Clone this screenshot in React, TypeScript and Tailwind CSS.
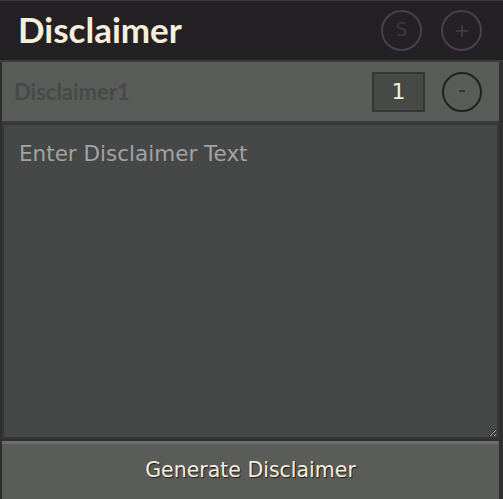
import React from 'react';

const App: React.FC = () => {
    return (
        <div className="w-[503px] h-[499px] bg-[#2e2f2e] flex flex-col overflow-hidden" style={{ fontFamily: 'Lato, "Open Sans", sans-serif' }}>
            <div className="h-[62px] bg-[#232124] border-t border-[#3a3a3c] border-b-2 border-b-[#3b3c3b] flex items-center justify-between pl-[18px] pr-[21px]">
                <h1 className="text-[35px] font-bold text-[#f6efd9] leading-none mt-[-2px]">Disclaimer</h1>
                <div className="flex gap-[19px]">
                    <button className="w-[41px] h-[41px] rounded-full border-2 border-[#4a3f52] flex items-center justify-center text-[19px] text-[#3d3840] pb-[2px]" style={{ fontFamily: '"DejaVu Sans", sans-serif' }}>
                        S
                    </button>
                    <button className="w-[41px] h-[41px] rounded-full border-2 border-[#4a3f52] flex items-center justify-center">
                        <svg width="14" height="14" viewBox="0 0 14 14">
                            <path d="M7 1v12M1 7h12" stroke="#4a3f52" strokeWidth="1.6" />
                        </svg>
                    </button>
                </div>
            </div>
            <div className="flex-1 flex flex-col pl-[2px] pr-[4px]">
                <div className="h-[59px] bg-[#5a5c5a] flex items-center justify-between pl-[12px] pr-[17px]">
                    <span className="text-[22px] font-bold text-[#484a48]">Disclaimer1</span>
                    <div className="flex items-center gap-[17px]">
                        <div className="w-[53px] h-[40px] bg-[#474947] border-2 border-[#353635] flex items-center justify-center text-[22px] text-[#f6efd9]" style={{ fontFamily: '"DejaVu Sans", sans-serif' }}>
                            1
                        </div>
                        <button className="w-[40px] h-[40px] rounded-full border-2 border-[#222222] flex items-center justify-center">
                            <svg width="8" height="4" viewBox="0 0 8 4" className="mt-[-2px]">
                                <path d="M1 2h6" stroke="#2a2a2a" strokeWidth="1.6" />
                            </svg>
                        </button>
                    </div>
                </div>
                <div className="h-[2px] bg-[#3b3c3b]" />
                <textarea
                    className="h-[316px] w-full bg-[#464847] border-2 border-[#353635] text-[21.5px] text-[#a3a3a3] placeholder:text-[#a3a3a3] px-[15px] pt-[13px] pb-[12px] outline-none resize-y"
                    style={{ fontFamily: '"DejaVu Sans", sans-serif' }}
                    placeholder="Enter Disclaimer Text"
                />
                <div className="h-[2px] bg-[#2e2f2e]" />
                <button
                    className="h-[58px] bg-[#5a5c5a] border-t-[3px] border-[#6b6d6b] text-[20.5px] text-[#f6efd9] flex items-center justify-center pb-[3px]"
                    style={{ fontFamily: '"DejaVu Sans", sans-serif', textShadow: '1px 1px 1px #1e1e1e' }}
                >
                    Generate Disclaimer
                </button>
            </div>
        </div>
    );
};

export default App;
